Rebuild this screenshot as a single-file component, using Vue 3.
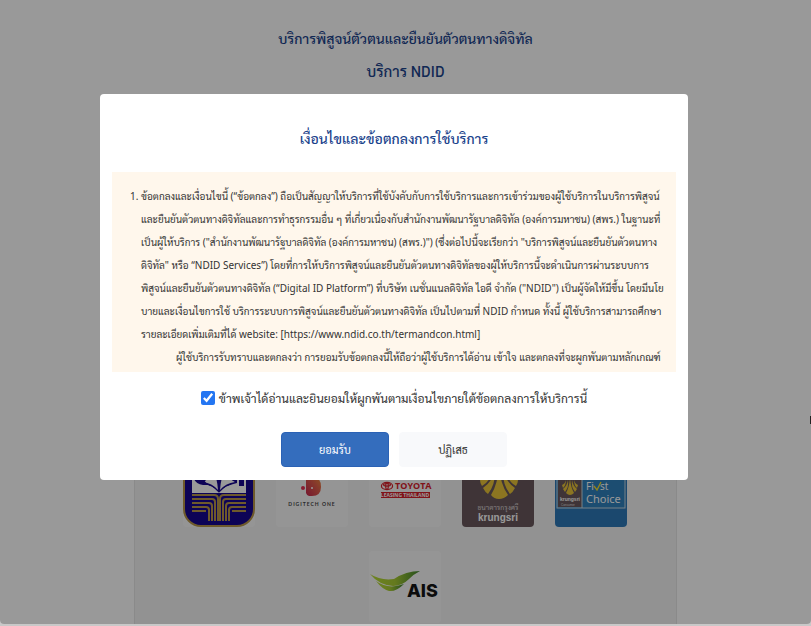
<script setup>
import { ref } from 'vue'

const accepted = ref(true)

const terms = [
  'ข้อตกลงและเงื่อนไขนี้ (“ข้อตกลง”) ถือเป็นสัญญาให้บริการที่ใช้บังคับกับการใช้บริการและการเข้าร่วมของผู้ใช้บริการในบริการพิสูจน์',
  'และยืนยันตัวตนทางดิจิทัลและการทำธุรกรรมอื่น ๆ ที่เกี่ยวเนื่องกับสำนักงานพัฒนารัฐบาลดิจิทัล (องค์การมหาชน) (สพร.) ในฐานะที่',
  'เป็นผู้ให้บริการ ("สำนักงานพัฒนารัฐบาลดิจิทัล (องค์การมหาชน) (สพร.)") (ซึ่งต่อไปนี้จะเรียกว่า "บริการพิสูจน์และยืนยันตัวตนทาง',
  'ดิจิทัล" หรือ “NDID Services”) โดยที่การให้บริการพิสูจน์และยืนยันตัวตนทางดิจิทัลของผู้ให้บริการนี้จะดำเนินการผ่านระบบการ',
  'พิสูจน์และยืนยันตัวตนทางดิจิทัล (“Digital ID Platform”) ที่บริษัท เนชั่นแนลดิจิทัล ไอดี จำกัด ("NDID") เป็นผู้จัดให้มีขึ้น โดยมีนโย',
  'บายและเงื่อนไขการใช้ บริการระบบการพิสูจน์และยืนยันตัวตนทางดิจิทัล เป็นไปตามที่ NDID กำหนด ทั้งนี้ ผู้ใช้บริการสามารถศึกษา',
  'รายละเอียดเพิ่มเติมที่ได้ website: [https://www.ndid.co.th/termandcon.html]'
]
const consent = 'ผู้ใช้บริการรับทราบและตกลงว่า การยอมรับข้อตกลงนี้ให้ถือว่าผู้ใช้บริการได้อ่าน เข้าใจ และตกลงที่จะผูกพันตามหลักเกณฑ์'
</script>

<template>
  <div class="screen">
    <main class="page">
      <h1>บริการพิสูจน์ตัวตนและยืนยันตัวตนทางดิจิทัล</h1>
      <h2>บริการ NDID</h2>
      <section class="providers">
        <div class="tile">
          <svg viewBox="0 0 72 72">
            <rect x="1" y="1" width="70" height="70" rx="17" fill="#160690" stroke="#b79548" stroke-width="2" />
            <path d="M9 14H63V38H9Z" fill="#fff" />
            <path d="M18 14H54V28Q43 30 36 38Q29 30 18 28Z" fill="#160690" />
            <path d="M22 14H30Q34 22 35 35Q29 28 20 27Q26 24 27 20ZM50 14H42Q38 22 37 35Q43 28 52 27Q46 24 45 20Z" fill="#fff" />
            <path d="M9 38V31Q26 26 36 38ZM63 38V31Q46 26 36 38Z" fill="#fff" />
            <path d="M11 24Q13 29 20 30H25L20 24ZM61 24V31H56V24Z" fill="#160690" />
            <g fill="none" stroke="#b79548" stroke-width="2">
              <path d="M9 40H31Q35 40 35 44V66M9 44H29Q32 44 32 47V66M9 48H26Q29 48 29 51V66M9 52H23Q26 52 26 55V66M9 56H23" />
              <path d="M63 40H41Q37 40 37 44V66M63 44H43Q40 44 40 47V66M63 48H46Q43 48 43 51V66M63 52H49Q46 52 46 55V66M63 56H49" />
            </g>
          </svg>
        </div>
        <div class="tile">
          <svg viewBox="0 0 72 72">
            <defs>
              <linearGradient id="digi" x1="0" y1="1" x2="1" y2="0">
                <stop offset="0" stop-color="#c52750" />
                <stop offset=".6" stop-color="#e0604a" />
                <stop offset="1" stop-color="#f09038" />
              </linearGradient>
            </defs>
            <path d="M30 20H36Q45 22 45 32Q45 41 36 41H33Q31 41 30 38Z" fill="url(#digi)" />
            <circle cx="27" cy="33" r="2" fill="#e22d50" />
            <circle cx="36" cy="33" r="1" fill="#fff" />
            <text x="36" y="51" text-anchor="middle" class="digitech">DIGITECH ONE</text>
          </svg>
        </div>
        <div class="tile">
          <svg viewBox="0 0 72 72">
            <g fill="none" stroke="#d6202b" stroke-width="1.2">
              <ellipse cx="18" cy="31" rx="5.6" ry="3.6" />
              <ellipse cx="18" cy="29.8" rx="3.5" ry="1.3" />
              <ellipse cx="18" cy="31" rx="1.3" ry="3.5" />
            </g>
            <text x="26" y="34" class="toyota">TOYOTA</text>
            <rect x="12" y="37" width="49" height="6" fill="#d6202b" />
            <text x="36" y="42" text-anchor="middle" class="leasing">LEASING THAILAND</text>
          </svg>
        </div>
        <div class="tile">
          <svg viewBox="0 0 72 72">
            <rect width="72" height="72" rx="4" fill="#69585c" />
            <g fill="#e9c438">
              <path d="M37 10Q36 29 29 40Q32 44 37 44Q42 44 46 40Q38 29 37 10Z" />
              <path d="M33 14Q31 26 21 33Q23 37 26 39Q34 29 33 14ZM41 14Q43 26 53 33Q51 37 48 39Q40 29 41 14Z" />
              <path d="M29 15Q26 23 18 25Q18 28 20 31Q29 26 29 15ZM45 15Q48 23 56 25Q56 28 54 31Q45 26 45 15Z" />
            </g>
            <text x="36" y="55" text-anchor="middle" class="bank-th">ธนาคารกรุงศรี</text>
            <text x="36" y="66" text-anchor="middle" class="bank-en">krungsri</text>
          </svg>
        </div>
        <div class="tile">
          <svg viewBox="0 0 72 72">
            <rect width="72" height="72" rx="4" fill="#2d78b8" />
            <rect x="2" y="17" width="68" height="36" fill="#2f80bc" stroke="#c8d8e2" stroke-width="1" />
            <rect x="3" y="17" width="24" height="35" fill="#69585c" />
            <path d="M27 17V53" stroke="#c8d8e2" />
            <g fill="#e9c438">
              <path d="M15 24Q14 33 11 38Q15 42 19 38Q16 33 15 24Z" />
              <path d="M13 25Q12 31 8 34L10 37Q14 32 13 25ZM17 25Q18 31 22 34L20 37Q16 32 17 25Z" />
              <path d="M11 25Q10 29 7 30L8 33Q11 30 11 25ZM19 25Q20 29 23 30L22 33Q19 30 19 25Z" />
            </g>
            <text x="15" y="46" text-anchor="middle" class="mini">krungsri</text>
            <text x="6" y="51" class="micro">Consumer</text>
            <text y="35" class="choice first"><tspan x="31">Fi</tspan><tspan x="45">st</tspan></text>
            <path d="M39 31L42 35L46 27" fill="none" stroke="#f4dc30" stroke-width="1.4" />
            <text x="31" y="48" class="choice">Choice</text>
          </svg>
        </div>
        <div class="tile">
          <svg viewBox="0 0 72 72">
            <defs>
              <linearGradient id="leaf">
                <stop offset="0" stop-color="#b8dc38" />
                <stop offset=".5" stop-color="#a8cb32" />
                <stop offset="1" stop-color="#3e8430" />
              </linearGradient>
            </defs>
            <path d="M1 23Q12 30 25 28Q37 20 51 20Q45 23 40 28Q33 35 24 35Q10 34 1 23Z" fill="url(#leaf)" />
            <path d="M7 30Q19 39 35 33Q27 41 20 40Q13 38 7 30Z" fill="url(#leaf)" />
            <text x="38" y="46" class="ais">AIS</text>
          </svg>
        </div>
      </section>
    </main>

    <div class="backdrop">
      <div class="dialog" role="dialog" aria-modal="true" aria-labelledby="terms-title">
        <h2 id="terms-title">เงื่อนไขและข้อตกลงการใช้บริการ</h2>
        <div class="terms">
          <ol>
            <li>
              <span v-for="line in terms" :key="line" class="line">{{ line }}</span>
              <p>{{ consent }}</p>
            </li>
          </ol>
        </div>
        <label class="agree">
          <input v-model="accepted" type="checkbox">
          <span>ข้าพเจ้าได้อ่านและยินยอมให้ผูกพันตามเงื่อนไขภายใต้ข้อตกลงการให้บริการนี้</span>
        </label>
        <div class="actions">
          <button type="button" class="primary">ยอมรับ</button>
          <button type="button">ปฏิเสธ</button>
        </div>
      </div>
    </div>
    <div class="edge-marker"></div>
  </div>
</template>

<style>
body {
  margin: 0;
  background: #c8c8c8;
}
</style>

<style scoped>
* {
  box-sizing: border-box;
}
.screen {
  position: relative;
  height: 100vh;
  padding-bottom: 2px;
  overflow: hidden;
  font-family: Sarabun, "Noto Sans Thai Looped", Loma, Garuda, "Noto Sans", sans-serif;
}
.page {
  display: flex;
  flex-direction: column;
  align-items: center;
  height: 100%;
  padding-top: 24px;
  background: #fff;
  border-radius: 0 0 4px 4px;
  overflow: hidden;
}
h1,
h2 {
  margin: 0;
  color: #1b438c;
  font-size: 14px;
  font-weight: 500;
  line-height: 28px;
  white-space: nowrap;
}
.page h2 {
  margin-top: 5px;
  font-size: 15px;
}
.providers {
  display: flex;
  flex: 1;
  flex-wrap: wrap;
  justify-content: center;
  align-content: flex-start;
  gap: 24px 21px;
  width: 67%;
  margin-top: 24px;
  padding: 345px 48px 0;
  background: #f4f4f4;
  border: 1px solid #e6e6e6;
  border-bottom: 0;
}
.tile {
  width: 72px;
  height: 72px;
  border-radius: 4px;
  background: #f9f9f9;
}
.tile svg {
  display: block;
  width: 100%;
}
.digitech {
  font: 700 5px Lato, sans-serif;
  letter-spacing: 1px;
  fill: #444;
}
.toyota {
  font: 700 9px "Open Sans", sans-serif;
  fill: #d6202b;
}
.leasing {
  font: 700 5px "Open Sans", sans-serif;
  fill: #fff;
}
.bank-th {
  font-size: 7px;
  fill: #d8d0d2;
}
.bank-en {
  font: 700 10px "Liberation Sans", sans-serif;
  fill: #fff;
}
.mini {
  font: 700 5px "Liberation Sans", sans-serif;
  fill: #fff;
}
.micro {
  font: 3px "Liberation Sans", sans-serif;
  fill: #ddd;
}
.choice {
  font: 11px "Noto Sans", sans-serif;
  fill: #fff;
}
.choice.first {
  font-size: 10px;
}
.ais {
  font: 800 18px Inter, sans-serif;
  fill: #151515;
}
.backdrop {
  position: absolute;
  inset: 0 0 2px;
  display: flex;
  align-items: flex-start;
  justify-content: center;
  padding: 94px 23px 0 0;
  background: rgb(0 0 0 / 40%);
  border-radius: 0 0 4px 4px;
}
.edge-marker {
  position: absolute;
  top: 416px;
  right: 0;
  width: 1px;
  height: 8px;
  background: #222;
}
.dialog {
  display: flex;
  flex-direction: column;
  align-items: center;
  width: 588px;
  padding: 30px 12px 13px;
  background: #fff;
  border-radius: 4px;
}
.terms {
  width: 100%;
  height: 200px;
  margin-top: 20px;
  padding: 13px 4px 0 29px;
  overflow: hidden;
  background: #fff7ec;
  color: #333;
  font-family: "Noto Sans", Sarabun, "Noto Sans Thai Looped", Loma, Garuda, sans-serif;
  font-size: 10px;
  line-height: 23px;
}
.terms ol {
  margin: 0;
  padding: 0;
}
.line {
  display: block;
  white-space: nowrap;
}
.terms p {
  margin: 0;
  text-indent: 35px;
  white-space: nowrap;
}
.agree {
  display: flex;
  align-items: center;
  gap: 4px;
  margin-top: 12px;
  color: #333;
  font-size: 12px;
  line-height: 28px;
  white-space: nowrap;
}
.agree input {
  width: 14px;
  height: 14px;
  margin: 0;
  accent-color: #2476f2;
}
.actions {
  display: flex;
  gap: 10px;
  margin-top: 20px;
}
button {
  width: 108px;
  height: 35px;
  padding: 0;
  border: 1px solid #f8f9fb;
  border-radius: 4px;
  background: #f8f9fb;
  color: #333;
  font-family: inherit;
  font-size: 11px;
}
.primary {
  border-color: #2b62b5;
  background: #346dbd;
  color: #fff;
}
</style>
